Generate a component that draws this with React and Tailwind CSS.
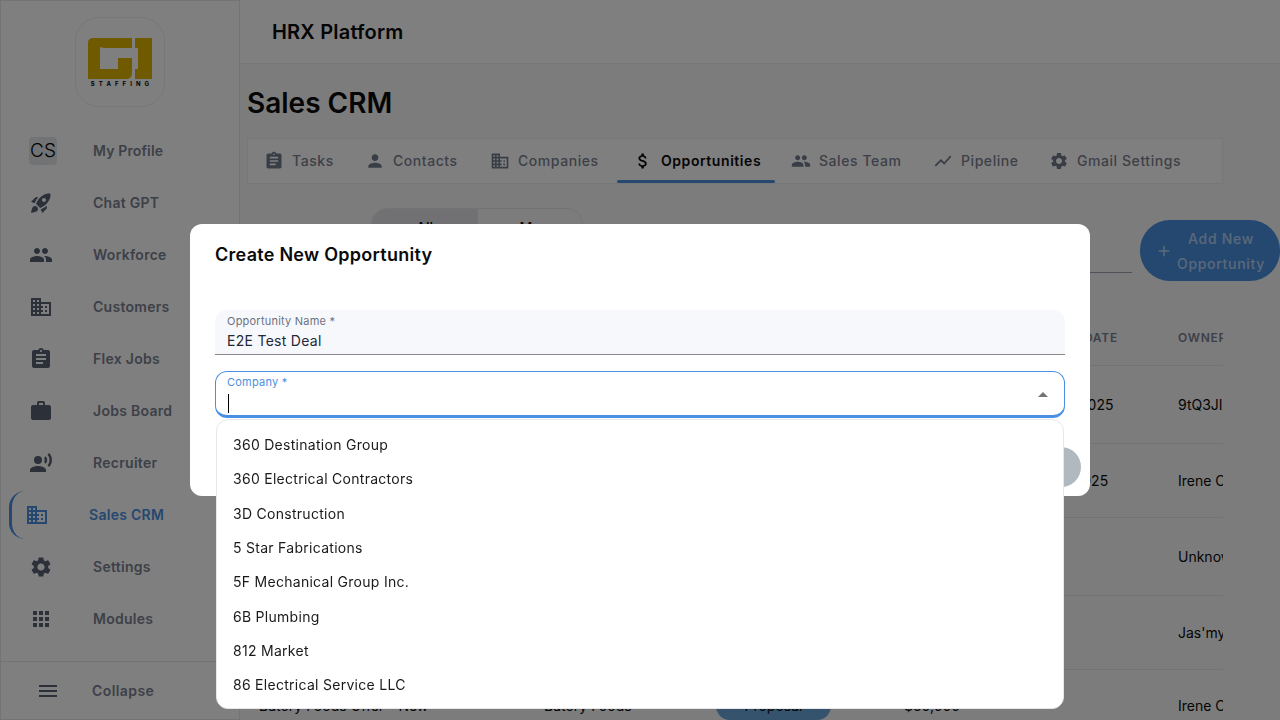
import {
  MdAdd,
  MdApps,
  MdArrowDropUp,
  MdAssignment,
  MdAttachMoney,
  MdBusiness,
  MdMenu,
  MdPeople,
  MdPerson,
  MdRecordVoiceOver,
  MdRocketLaunch,
  MdSettings,
  MdShowChart,
  MdWork,
} from 'react-icons/md'

const navItems = [
  { label: 'Chat GPT', icon: MdRocketLaunch },
  { label: 'Workforce', icon: MdPeople },
  { label: 'Customers', icon: MdBusiness },
  { label: 'Flex Jobs', icon: MdAssignment },
  { label: 'Jobs Board', icon: MdWork },
  { label: 'Recruiter', icon: MdRecordVoiceOver },
  { label: 'Sales CRM', icon: MdBusiness, active: true },
  { label: 'Settings', icon: MdSettings },
  { label: 'Modules', icon: MdApps },
]

const tabs = [
  { label: 'Tasks', icon: MdAssignment, width: 'w-[41px]' },
  { label: 'Contacts', icon: MdPerson, width: 'w-[65px]' },
  { label: 'Companies', icon: MdBusiness, width: 'w-[83px]' },
  { label: 'Opportunities', icon: MdAttachMoney, width: 'w-[98px]', active: true },
  { label: 'Sales Team', icon: MdPeople, width: 'w-[82px]' },
  { label: 'Pipeline', icon: MdShowChart, width: 'w-[56px]' },
  { label: 'Gmail Settings', icon: MdSettings, width: 'w-[104px]' },
]

const rows = [
  { height: 'h-[78px]', date: 'Oct 15, 2025', owner: '9tQ3JIxk' },
  { height: 'h-[74px]', date: 'Oct 2, 2025', owner: 'Irene Chen' },
  { height: 'h-[78px]', owner: 'Unknown' },
  { height: 'h-[74px]', owner: "Jas'mya" },
  {
    height: 'h-[72px]',
    name: 'Batory Foods Offer - New',
    company: 'Batory Foods',
    stage: 'Proposal',
    value: '$50,000',
    owner: 'Irene Chen',
  },
]

const companies = [
  '360 Destination Group',
  '360 Electrical Contractors',
  '3D Construction',
  '5 Star Fabrications',
  '5F Mechanical Group Inc.',
  '6B Plumbing',
  '812 Market',
  '86 Electrical Service LLC',
]

const tableCols = 'grid grid-cols-[285px_172px_188px_134px_140px_57px] items-center'

function Logo() {
  return (
    <div className="mt-[16px] ml-[74px] w-[90px] h-[90px] rounded-[24px] border border-[#eeeeee] flex flex-col items-center">
      <svg viewBox="0 0 64 41" className="w-[64px] h-[41px] mt-[20px] shrink-0">
        <path
          d="M0 5Q0 0 5 0H44V10H16L12 9V31H30V20H44V35Q44 41 38 41H0Z"
          fill="#e0b400"
        />
        <path d="M47 0H64V41H47V31H50V10H47Z" fill="#e0b400" />
      </svg>
      <span className="mt-[1px] text-[6px] leading-[7px] font-bold tracking-[0.68em] text-black pl-[4px]">
        STAFFING
      </span>
    </div>
  )
}

function Sidebar() {
  return (
    <aside className="w-[240px] h-[720px] shrink-0 bg-white border border-[#e5e7eb] flex flex-col">
      <Logo />
      <nav className="mt-[18px] flex-1">
        <div className="h-[52px] flex items-center pl-[28px]">
          <div className="w-[28px] h-[28px] rounded-[4px] bg-[#e5e7eb] flex items-center justify-center text-[19px] font-light text-black">
            CS
          </div>
          <span className="ml-[36px] text-sm font-semibold text-[#7b8190] tracking-[0.01em]">My Profile</span>
        </div>
        {navItems.map((item) => (
          <div key={item.label} className="h-[52px] flex items-center">
            {item.active ? (
              <div className="ml-[8px] h-[48px] w-[180px] flex items-center rounded-l-[16px] border-l-[3px] border-[#4a90e2] pl-[13px]">
                <item.icon size={24} className="text-[#4a90e2]" />
                <span className="ml-[40px] text-sm font-semibold text-[#4a90e2] tracking-[0.02em]">{item.label}</span>
              </div>
            ) : (
              <div className="flex items-center pl-[28px]">
                <item.icon size={24} className="text-[#566073]" />
                <span className="ml-[40px] text-sm font-semibold text-[#7b8190] tracking-[0.02em]">{item.label}</span>
              </div>
            )}
          </div>
        ))}
      </nav>
      <div className="h-[58px] pt-[1px] border-t border-[#e5e7eb] flex items-center pl-[35px]">
        <MdMenu size={24} className="text-[#566073]" />
        <span className="ml-[32px] text-sm font-semibold text-[#7b8190] tracking-[0.03em]">Collapse</span>
      </div>
    </aside>
  )
}

function Tabs() {
  return (
    <div className="mt-[14px] w-[976px] h-[46px] bg-white border border-[#eceef1] flex items-stretch">
      {tabs.map((tab) => (
        <div
          key={tab.label}
          className={`relative flex items-center gap-2 px-4 text-sm tracking-[0.04em] whitespace-nowrap ${
            tab.active ? 'font-semibold text-[#0a0a0a]' : 'font-medium text-[#7b8190]'
          }`}
        >
          <tab.icon size={20} className={`shrink-0 ${tab.active ? 'text-[#0a0a0a]' : 'text-[#707a8c]'}`} />
          <span className={tab.width}>{tab.label}</span>
          {tab.active && <span className="absolute left-0 right-0 bottom-0 h-[3px] rounded-full bg-[#4a90e2]" />}
        </div>
      ))}
    </div>
  )
}

function Toolbar() {
  return (
    <div className="mt-[24px] flex items-start">
      <div className="ml-[124px] w-[212px] h-[39px] flex rounded-t-[16px] border border-[#e5e7eb] overflow-hidden text-sm font-medium text-[#0a0a0a]">
        <div className="w-[106px] bg-[#e2e3e6] border-r border-[#e5e7eb] flex items-center justify-center">All</div>
        <div className="flex-1 flex items-center justify-center">My</div>
      </div>
      <div className="ml-[20px] w-[529px] h-[65px] border-b border-[#9ca3af]" />
      <button className="ml-[8px] mt-[12px] w-[140px] h-[61px] rounded-[30px] bg-[#4a90e2] text-white/60 flex items-center text-sm font-medium leading-[25px] pl-[15px]">
        <MdAdd size={18} className="shrink-0" />
        <span className="flex-1 text-center pr-[11px] tracking-[0.05em]">
          Add New
          <br />
          Opportunity
        </span>
      </button>
    </div>
  )
}

function Table() {
  return (
    <div className="mt-[29px] w-[976px] overflow-hidden text-sm text-[#0a0a0a]">
      <div className={`${tableCols} h-[56px] border-b border-[#e5e7eb] text-xs font-semibold tracking-[0.06em] text-[#7b8190]`}>
        <div className="col-start-5 pl-[11px] whitespace-nowrap">CLOSE DATE</div>
        <div className="pl-3">OWNER</div>
      </div>
      {rows.map((row, i) => (
        <div key={i} className={`${tableCols} ${row.height} border-b border-[#e5e7eb]`}>
          <div className="pl-3 whitespace-nowrap">{row.name}</div>
          <div className="pl-3 whitespace-nowrap">{row.company}</div>
          <div className="pl-3">
            {row.stage && (
              <span className="flex items-center justify-center w-[115px] h-[28px] rounded-[14px] bg-[#6ba7d8]">
                {row.stage}
              </span>
            )}
          </div>
          <div className="pl-3">{row.value}</div>
          <div className="pl-[4px] whitespace-nowrap">{row.date}</div>
          <div className="pl-3 whitespace-nowrap overflow-hidden">{row.owner}</div>
        </div>
      ))}
    </div>
  )
}

function Dialog() {
  return (
    <div className="fixed inset-0 bg-black/50">
      <div className="absolute left-[190px] top-[224px] w-[900px] h-[272px] bg-white rounded-[12px] px-[25px] pt-[19px]">
        <h2 className="text-lg leading-[24px] font-semibold text-[#0a0a0a] tracking-[0.015em]">Create New Opportunity</h2>
        <div className="mt-[43px] h-[45px] rounded-t-[12px] bg-[#f7f8fc] border-b border-[#8a8a8a] px-3 pt-[5px]">
          <div className="text-[11px] leading-[13px] text-[#6b7280] tracking-[0.02em]">Opportunity Name *</div>
          <div className="text-sm leading-[20px] mt-[3px] text-[#1f2937] tracking-[0.02em]">E2E Test Deal</div>
        </div>
        <div className="mt-[16px] relative h-[47px] rounded-[12px] border border-[#4a90e2] border-b-[3px] px-[11px] pt-[4px]">
          <div className="text-[11px] leading-[13px] text-[#4a90e2] tracking-[0.02em]">Company *</div>
          <div className="mt-[5px] ml-[1px] w-px h-[19px] bg-black" />
          <MdArrowDropUp size={24} className="absolute right-[9px] top-[11px] text-[#757575]" />
        </div>
        <div className="mt-[29px] flex justify-end mr-[-16px]">
          <div className="w-[40px] h-[40px] rounded-full bg-[#b0b9c0]" />
        </div>
      </div>
      <ul className="absolute left-[216px] top-[419px] w-[848px] h-[290px] bg-white rounded-[12px] border border-[#e5e7eb] pt-[8px] overflow-hidden text-sm text-[#1a1a1a]">
        {companies.map((name) => (
          <li key={name} className="h-[34.3px] flex items-center pl-4 tracking-[0.02em]">
            {name}
          </li>
        ))}
      </ul>
    </div>
  )
}

export default function App() {
  return (
    <div className="relative w-[1280px] h-[720px] overflow-hidden flex bg-[#f8f9fb] font-['Inter',sans-serif]">
      <Sidebar />
      <div className="flex-1 min-w-0">
        <header className="h-[64px] bg-white border-b border-[#eceef1] flex items-center pl-[32px] text-xl font-semibold text-[#0a0a0a] tracking-[0.01em]">
          HRX Platform
        </header>
        <main className="pl-[7px]">
          <h1 className="mt-[18px] text-[28px] leading-[42px] font-semibold text-[#0a0a0a]">Sales CRM</h1>
          <Tabs />
          <Toolbar />
          <Table />
        </main>
      </div>
      <Dialog />
    </div>
  )
}
